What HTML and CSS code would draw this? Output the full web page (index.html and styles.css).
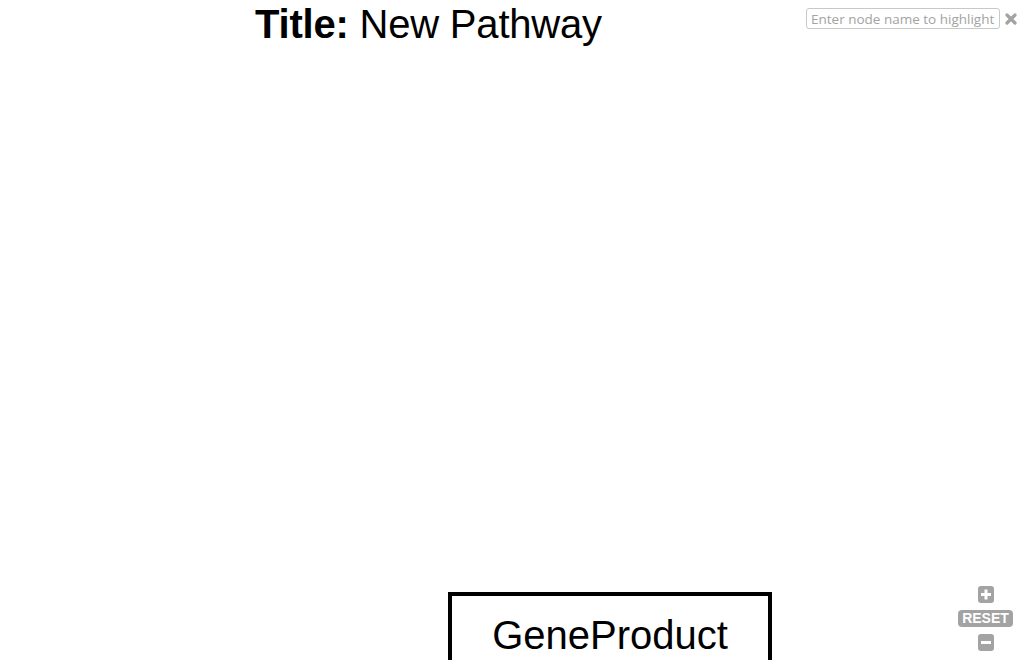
FILE: index.html
```html
<!DOCTYPE html>
<html>
<head>
<meta charset="utf-8">
<link rel="stylesheet" href="styles.css">
</head>
<body>
<div class="viewer">
  <header class="title-bar">
    <h1 class="title"><b>Title:</b> New Pathway</h1>
  </header>
  <div class="search">
    <input class="search-input" type="text" placeholder="Enter node name to highlight">
    <svg class="clear" width="12" height="12" viewBox="0 0 12 12">
      <path d="M2 2 L10 10 M10 2 L2 10" stroke="#a3a3a3" stroke-width="3.2" stroke-linecap="round"/>
    </svg>
  </div>
  <div class="canvas">
    <div class="node"><span class="node-label">GeneProduct</span></div>
  </div>
  <div class="zoom">
    <div class="zbtn">
      <svg width="16" height="17" viewBox="0 0 16 17"><path d="M8 3.5 V13.5 M3 8.5 H13" stroke="#fff" stroke-width="3"/></svg>
    </div>
    <div class="reset">RESET</div>
    <div class="zbtn">
      <svg width="16" height="17" viewBox="0 0 16 17"><path d="M3 8.5 H13" stroke="#fff" stroke-width="3"/></svg>
    </div>
  </div>
</div>
</body>
</html>
```
FILE: styles.css
```css
html, body {
  margin: 0;
  padding: 0;
  background: #fff;
}
.viewer {
  position: relative;
  width: 1024px;
  height: 660px;
  overflow: hidden;
  font-family: "Liberation Sans", Arial, sans-serif;
}
.title-bar {
  padding-left: 255px;
  padding-top: 2px;
}
.title {
  margin: 0;
  font-size: 40px;
  font-weight: normal;
  color: #000;
  line-height: normal;
  letter-spacing: -0.2px;
}
.title b {
  font-weight: bold;
}
.search {
  position: absolute;
  top: 8px;
  left: 806px;
  display: flex;
  align-items: center;
  gap: 5px;
}
.search-input {
  box-sizing: border-box;
  width: 194px;
  height: 21px;
  margin: 0;
  padding: 0 4px;
  border: 1px solid #c8c8c8;
  border-radius: 3px;
  font-family: "Open Sans", sans-serif;
  font-size: 13.5px;
  color: #333;
  outline: none;
}
.search-input::placeholder {
  color: #a3a3a3;
}
.clear {
  display: block;
}
.canvas {
  position: absolute;
  inset: 0;
  pointer-events: none;
}
.node {
  position: absolute;
  left: 448px;
  top: 592px;
  width: 324px;
  height: 110px;
  box-sizing: border-box;
  border: 4px solid #000;
  padding-top: 17px;
  text-align: center;
}
.node-label {
  font-size: 40px;
  line-height: normal;
  color: #000;
}
.zoom {
  position: absolute;
  left: 958px;
  top: 586px;
  width: 55px;
  display: flex;
  flex-direction: column;
  align-items: center;
  gap: 7px;
}
.zbtn {
  width: 16px;
  height: 17px;
  border-radius: 3px;
  background: #a3a3a3;
}
.zbtn svg {
  display: block;
}
.reset {
  width: 55px;
  height: 17px;
  border-radius: 4px;
  background: #a3a3a3;
  color: #fff;
  font-weight: bold;
  font-size: 14px;
  line-height: 17px;
  text-align: center;
}
```
